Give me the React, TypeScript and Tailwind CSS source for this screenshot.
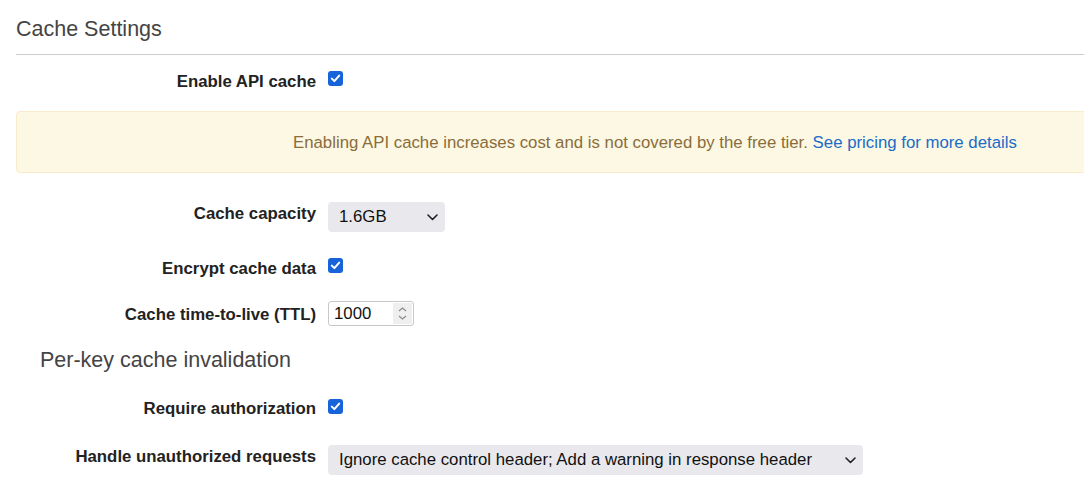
import React from "react";

const font = { fontFamily: '"Liberation Sans", Arial, sans-serif' };

function Check() {
  return (
    <span className="flex w-[15px] h-[15px] items-center justify-center rounded-[3px] bg-[#1763d8] shrink-0">
      <svg width="11" height="11" viewBox="0 0 11 11" fill="none">
        <path d="M1.8 5.6 L4.4 8.1 L9.2 2.6" stroke="#fff" strokeWidth="2" strokeLinecap="round" strokeLinejoin="round" />
      </svg>
    </span>
  );
}

function Chevron() {
  return (
    <svg width="11" height="7" viewBox="0 0 11 7" fill="none">
      <path d="M1 1 L5.5 5.5 L10 1" stroke="#222" strokeWidth="1.6" strokeLinecap="round" strokeLinejoin="round" />
    </svg>
  );
}

function Row({ label, top, labelTop = 0, children }: { label: string; top: string; labelTop?: number; children: React.ReactNode }) {
  return (
    <div className={`flex items-start gap-3 ${top}`}>
      <div
        className="w-[316px] text-right font-bold text-[16.8px] leading-[20px] text-[#222] shrink-0"
        style={{ marginTop: labelTop }}
      >
        {label}
      </div>
      {children}
    </div>
  );
}

function Select({ value, width }: { value: string; width: string }) {
  return (
    <div className={`flex h-[30px] ${width} items-center justify-between rounded-[4px] bg-[#e9e9ed] pl-[11px] pr-[7px] text-[16.8px] text-[#111]`}>
      <span>{value}</span>
      <Chevron />
    </div>
  );
}

export default function App() {
  return (
    <div className="w-[1084px] h-[488px] overflow-hidden bg-white" style={font}>
      <div className="w-[1300px]">
        <h2 className="pl-4 pt-[17px] text-[21.5px] leading-[24px] font-normal text-[#444]">Cache Settings</h2>
        <div className="ml-4 mt-[13px] border-t border-[#ccc]" />

        <Row label="Enable API cache" top="mt-[16px]" labelTop={1}>
          <Check />
        </Row>

        <div className="ml-4 mt-[19px] flex h-[62px] items-center rounded-[4px] border border-[#faebcc] bg-[#fcf8e3] pl-[276px] pt-[2px] text-[16.8px] text-[#8a6d3b]">
          <span>
            Enabling API cache increases cost and is not covered by the free tier.{" "}
            <a className="text-[#1a6cc9]">See pricing for more details</a>
          </span>
        </div>

        <Row label="Cache capacity" top="mt-[29px]" labelTop={2}>
          <Select value="1.6GB" width="w-[117px]" />
        </Row>

        <Row label="Encrypt cache data" top="mt-[26px]" labelTop={1}>
          <Check />
        </Row>

        <Row label="Cache time-to-live (TTL)" top="mt-[22px]" labelTop={4}>
          <div className="flex h-[25px] w-[86px] items-center justify-between rounded-[3px] border border-[#c8c8c8] pl-[5px] pr-[1px] text-[16.8px] text-[#111]">
            <span>1000</span>
            <div className="flex h-[21px] w-[19px] flex-col items-center justify-center gap-[3px] bg-[#efefef]">
              <svg width="9" height="5" viewBox="0 0 9 5" fill="none">
                <path d="M1 4 L4.5 1 L8 4" stroke="#8a8a8a" strokeWidth="1.2" />
              </svg>
              <svg width="9" height="5" viewBox="0 0 9 5" fill="none">
                <path d="M1 1 L4.5 4 L8 1" stroke="#8a8a8a" strokeWidth="1.2" />
              </svg>
            </div>
          </div>
        </Row>

        <h3 className="pl-10 mt-[22px] text-[21.5px] leading-[24px] font-normal text-[#444]">Per-key cache invalidation</h3>

        <Row label="Require authorization" top="mt-[27px]">
          <Check />
        </Row>

        <Row label="Handle unauthorized requests" top="mt-[26px]" labelTop={2}>
          <Select value="Ignore cache control header; Add a warning in response header" width="w-[535px]" />
        </Row>
      </div>
    </div>
  );
}
